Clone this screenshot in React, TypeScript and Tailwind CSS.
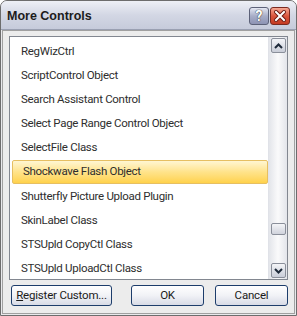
import React from "react";

const items = [
  "RegWizCtrl",
  "ScriptControl Object",
  "Search Assistant Control",
  "Select Page Range Control Object",
  "SelectFile Class",
  "Shockwave Flash Object",
  "Shutterfly Picture Upload Plugin",
  "SkinLabel Class",
  "STSUpld CopyCtl Class",
  "STSUpld UploadCtl Class",
];

function Chevron({ up }: { up?: boolean }) {
  return (
    <svg width="9" height="6" viewBox="0 0 9 6">
      <path
        d={up ? "M1 5 L4.5 1.5 L8 5" : "M1 1 L4.5 4.5 L8 1"}
        fill="none"
        stroke="#1e2a3a"
        strokeWidth="2"
      />
    </svg>
  );
}

function ScrollBtn({ up }: { up?: boolean }) {
  return (
    <div className="w-[15px] h-[15px] border border-[#8a8f9a] rounded-[2px] bg-gradient-to-b from-[#f4f5f8] to-[#c9cdd8] flex items-center justify-center">
      <Chevron up={up} />
    </div>
  );
}

function Btn({ children, w }: { children: React.ReactNode; w: string }) {
  return (
    <div
      className={`${w} h-[21px] border border-[#1d3d6b] rounded-[3px] bg-gradient-to-b from-[#ffffff] via-[#f1f2f6] to-[#d8dbe6] flex items-center justify-center text-[11.5px] tracking-[-0.2px] text-[#1a1a1a] whitespace-nowrap`}
    >
      {children}
    </div>
  );
}

export default function App() {
  return (
    <div
      className="w-[297px] h-[316px] bg-white"
      style={{ fontFamily: "Roboto, 'Liberation Sans', sans-serif" }}
    >
      <div className="w-[297px] h-[316px] border border-[#6d6d6d] rounded-t-[7px] overflow-hidden flex flex-col bg-[#d9dbe3]">
        <div className="h-[28px] flex items-center pl-[6px] pr-[6px] bg-gradient-to-b from-[#eef0f6] via-[#d3d7e4] to-[#c6cbdb]">
          <div
            className="font-bold text-[12.5px] text-[#1c1c1c] flex-1 leading-none pt-[2px]"
            style={{ fontFamily: "'Liberation Sans', Arial, sans-serif" }}
          >
            More Controls
          </div>
          <div className="flex gap-[1px] items-center pt-[2px]">
            <div className="w-[20px] h-[18px] rounded-[3px] border border-[#5c6178] bg-gradient-to-b from-[#e4e7f2] via-[#a8aec8] to-[#8d93b3] flex items-center justify-center text-white font-bold text-[14px] leading-none" style={{ textShadow: "0 0 1px #333, 0 0 1px #333" }}>
              ?
            </div>
            <div className="w-[20px] h-[18px] rounded-[3px] border border-[#7a2a20] bg-gradient-to-b from-[#f5a894] via-[#d9553c] to-[#c43a22] flex items-center justify-center">
              <svg width="12" height="12" viewBox="0 0 12 12">
                <path d="M2 2 L10 10 M10 2 L2 10" stroke="#6b1a10" strokeWidth="4" strokeLinecap="square" />
                <path d="M2 2 L10 10 M10 2 L2 10" stroke="#ffffff" strokeWidth="2" strokeLinecap="square" />
              </svg>
            </div>
          </div>
        </div>
        <div className="flex-1 border-t border-[#9aa0b2] bg-[#e9e9ec] px-[1px] pb-[1px] flex flex-col">
          <div className="flex-1 border border-[#a0a0a0] bg-[#ececec] px-[6px] pt-[5px] pb-[6px] flex flex-col">
            <div className="h-[244px] border border-[#828790] bg-white flex overflow-hidden">
              <div className="flex-1 pl-[1px] pt-[3px] overflow-hidden">
                {items.map((t, i) => (
                  <div
                    key={t}
                    className={`h-[24px] flex items-center pl-[10px] text-[11.5px] tracking-[-0.3px] text-[#2e2e2e] whitespace-nowrap ${
                      i === 5
                        ? "ml-[1px] h-[23px] mb-[1px] border border-[#e6bf62] rounded-[2px] bg-gradient-to-b from-[#fff6d2] via-[#ffe38a] to-[#ffd24a] pl-[9px]"
                        : ""
                    }`}
                  >
                    {t}
                  </div>
                ))}
              </div>
              <div className="w-[19px] bg-gradient-to-r from-[#e3e5ea] via-[#fafafb] to-[#e3e5ea] border-l border-[#e0e2e8] flex flex-col items-center pt-[1px] pb-[1px]">
                <ScrollBtn up />
                <div className="flex-1 flex flex-col items-center">
                  <div className="h-[170px]" />
                  <div className="w-[15px] h-[12px] border border-[#8a8f9a] rounded-[2px] bg-gradient-to-b from-[#f4f5f8] to-[#d0d3dc]" />
                </div>
                <ScrollBtn />
              </div>
            </div>
            <div className="flex mt-[5px] pl-[2px]">
              <Btn w="w-[101px]">
                <span>
                  <span className="underline">R</span>egister Custom...
                </span>
              </Btn>
              <div className="ml-[19px]">
                <Btn w="w-[73px]">OK</Btn>
              </div>
              <div className="ml-[11px]">
                <Btn w="w-[73px]">Cancel</Btn>
              </div>
            </div>
          </div>
        </div>
      </div>
    </div>
  );
}
